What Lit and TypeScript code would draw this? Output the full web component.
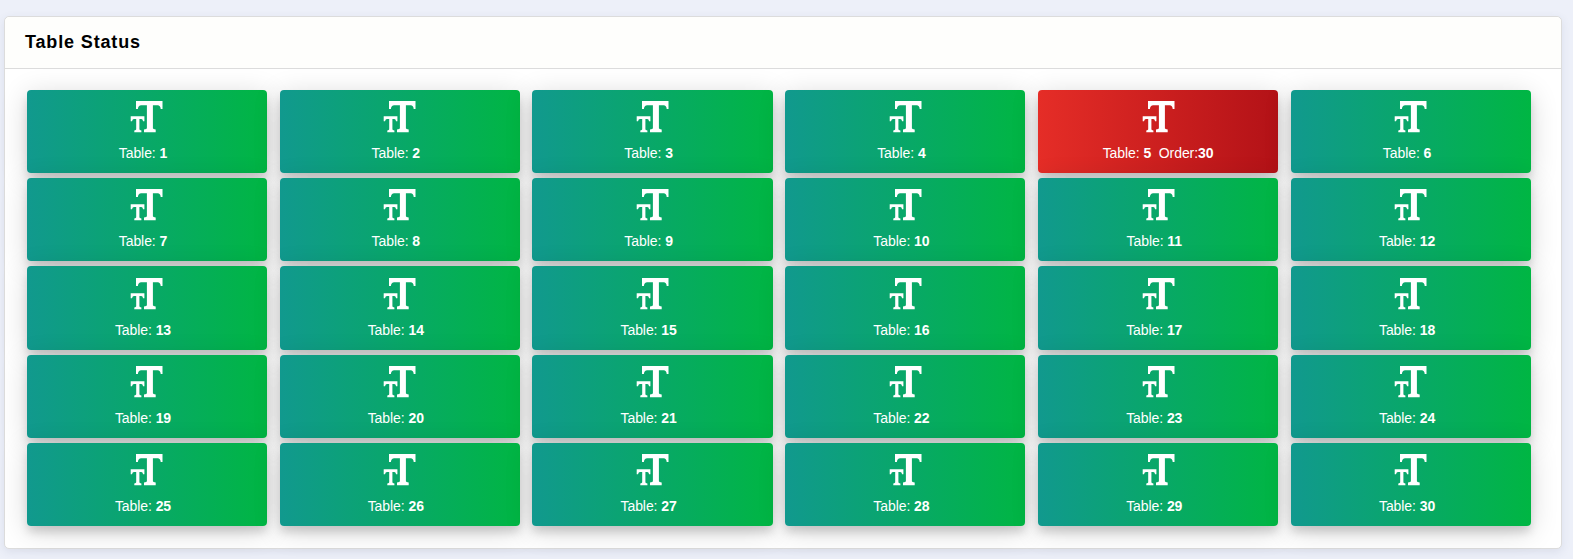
import { LitElement, html, css } from "lit";
import { customElement, property } from "lit/decorators.js";

@customElement("table-tile")
class TableTile extends LitElement {
  @property({ type: Number }) number = 0;
  @property({ type: Number }) order = 0;

  static styles = css`
    :host { display: block; }
    .tile {
      height: 83.2px;
      box-sizing: border-box;
      padding-top: 11.25px;
      border-radius: 4px;
      color: #fff;
      text-align: center;
      background: linear-gradient(to right, #11998e, #00b643);
      box-shadow: 0 7px 10px -1px rgba(0, 0, 0, 0.15), 0 5px 28px 0 rgba(0, 0, 0, 0.16);
    }
    .busy { background: linear-gradient(to right, #e52d27, #b31217); }
    svg { display: block; width: 33px; height: 32px; margin: 0 auto; fill: #fff; }
    .label { font-size: 14px; line-height: 20px; letter-spacing: -0.07px; margin-top: 10px; white-space: pre; }
  `;

  render() {
    return html`<div class="tile ${this.order ? "busy" : ""}">
      <svg viewBox="-0.7 0 33 32">
        <path d="M5.300 0H31.800V8H30Q29.600 4.300 27 4.300H22.200V27.300Q22.200 28.300 25 28.600V31.200H13.300V28.600Q16.200 28.300 16.200 27.300V4.300H10.500Q7.600 4.300 7.200 8H5.300Z"/>
        <path d="M0 15.300H13.700V20.300H12.400Q12 17.900 10.500 17.900H8.700V28.300Q8.700 29.300 10.700 29.500V31.200H3.600V29.500Q5.500 29.300 5.500 28.300V17.900H3.300Q1.800 17.900 1.300 20.300H0Z"/>
      </svg>
      <div class="label">Table: <b>${this.number}</b>&nbsp; ${this.order ? html`Order:<b>${this.order}</b>` : ""}</div>
    </div>`;
  }
}

@customElement("app-root")
class AppRoot extends LitElement {
  static styles = css`
    :host {
      display: block;
      box-sizing: border-box;
      height: 559px;
      overflow: hidden;
      padding: 16px 11px 0 4px;
      background: #edf0f9;
      font-family: "Liberation Sans", Arial, sans-serif;
    }
    .panel {
      box-sizing: border-box;
      height: 532.500px;
      background: #fff;
      border: 1px solid #dcdcdc;
      border-radius: 5px;
      box-shadow: 0 3px 10px rgba(60, 70, 110, 0.1);
    }
    .head {
      box-sizing: border-box;
      height: 52px;
      padding-left: 20px;
      border-bottom: 1px solid #dcdcdc;
      border-radius: 5px 5px 0 0;
      background: #fefefc;
    }
    h2 { margin: 0; font-size: 18px; line-height: 51px; letter-spacing: 0.85px; color: #000; }
    .grid {
      display: grid;
      grid-template-columns: repeat(6, 1fr);
      column-gap: 12.6px;
      row-gap: 5px;
      padding: 21px 30px 0 21.700px;
    }
  `;

  render() {
    return html`<section class="panel">
      <header class="head"><h2>Table Status</h2></header>
      <div class="grid">
        ${Array.from({ length: 30 }, (_, i) => html`<table-tile .number=${i + 1} .order=${i === 4 ? 30 : 0}></table-tile>`)}
      </div>
    </section>`;
  }
}
